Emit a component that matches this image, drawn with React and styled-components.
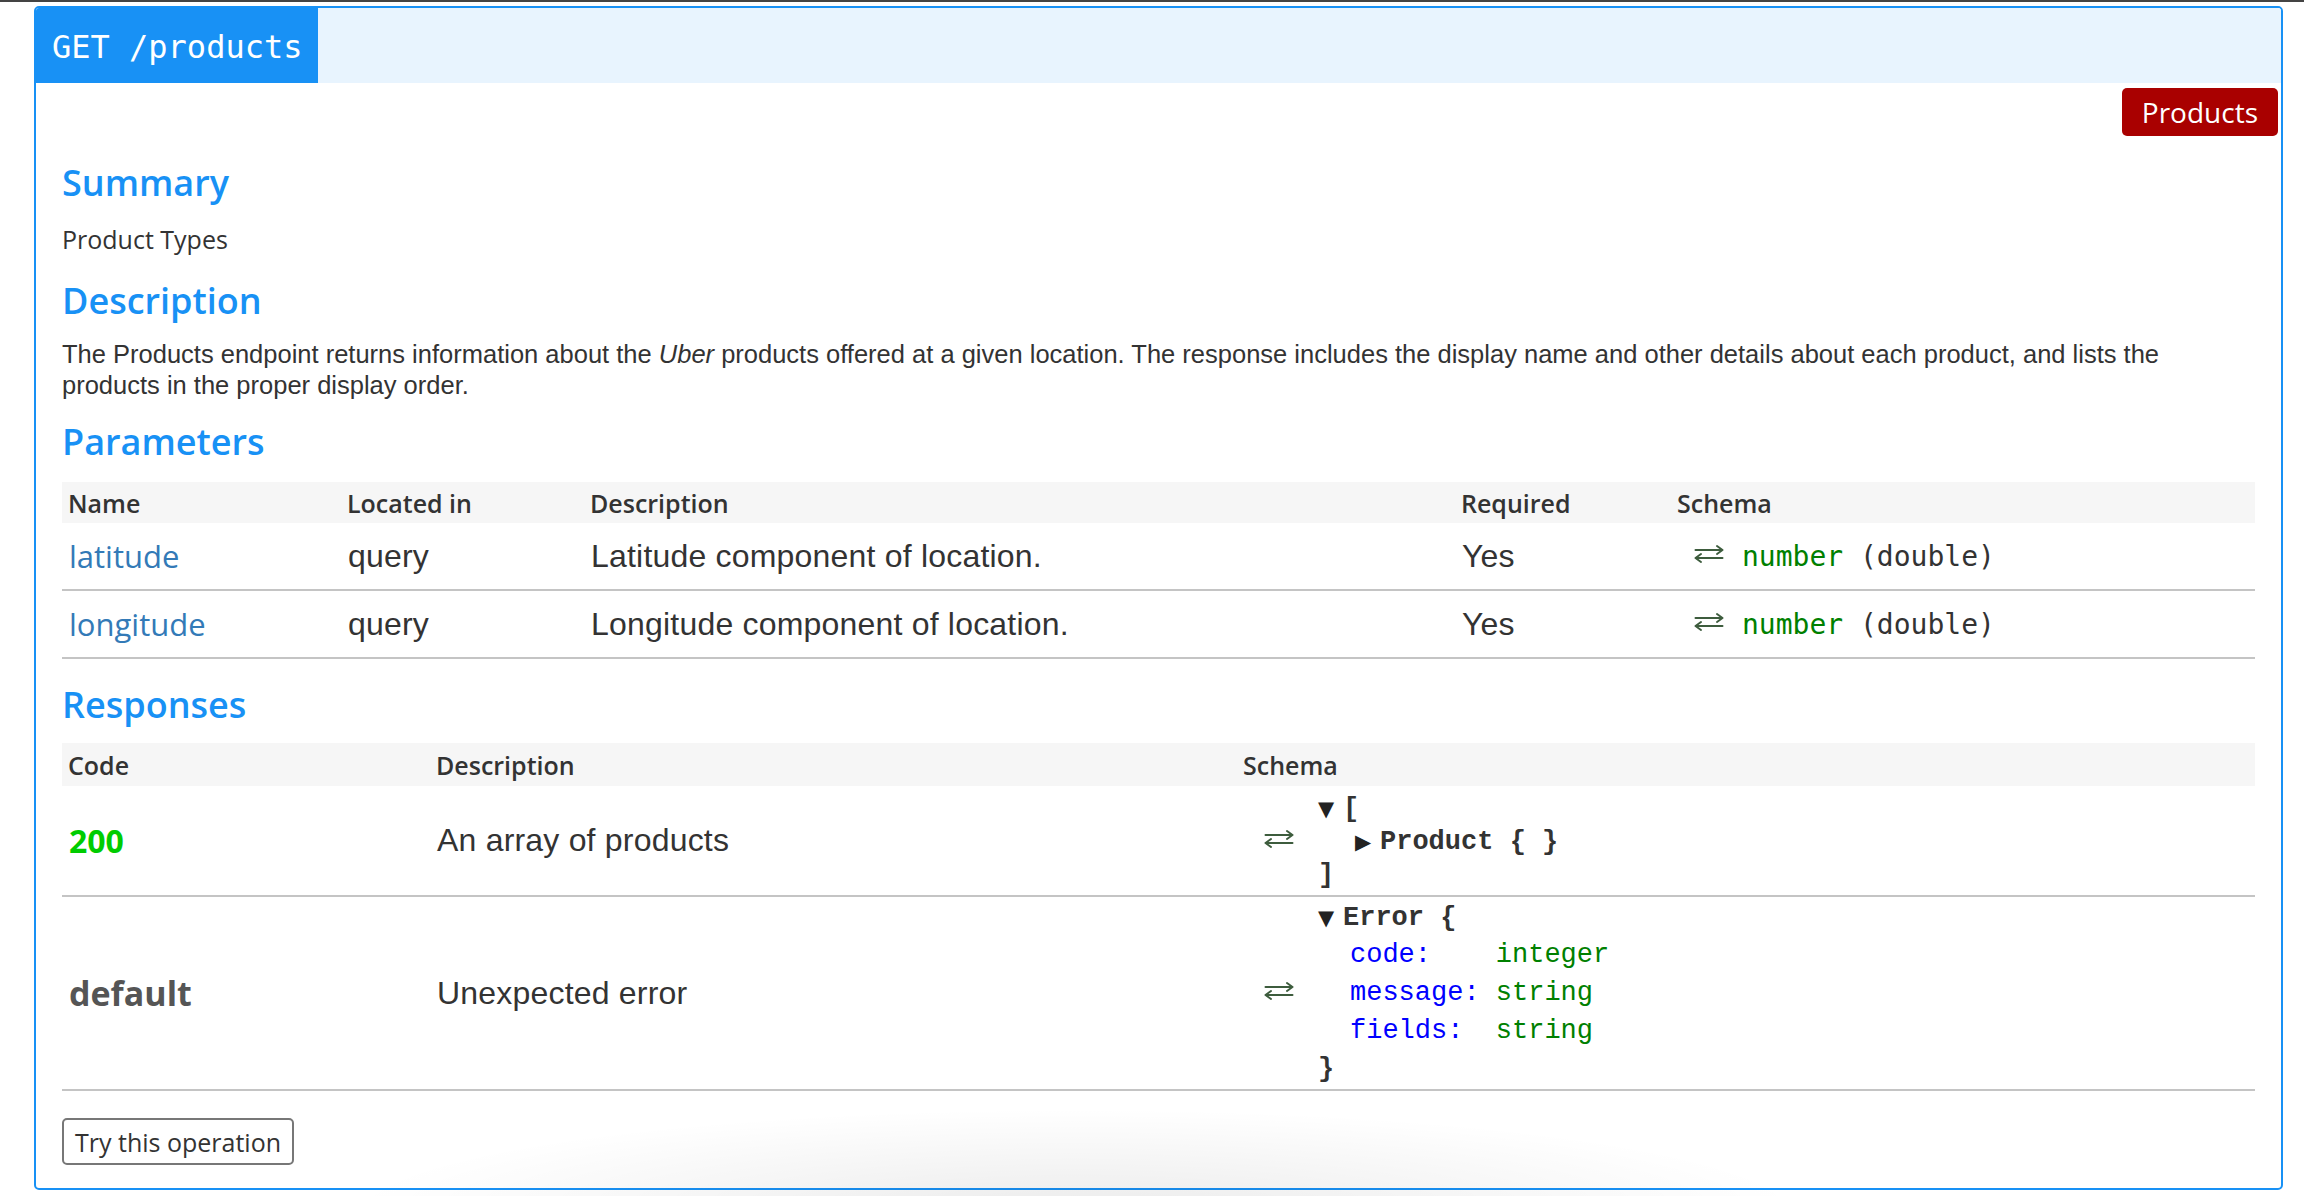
import React from "react"
import styled, { createGlobalStyle } from "styled-components"

const blue = "#1891f5"

const GlobalStyle = createGlobalStyle`
html, body {
  margin: 0;
  padding: 0;
  background: #fff;
}
body {
  border-top: 2px solid #444;
  font-family: "Open Sans", "Liberation Sans", sans-serif;
  color: #333;
}
`

const Page = styled.div`
padding: 4px 21px 6px 34px;
`

const Card = styled.section`
position: relative;
border: 2px solid ${blue};
border-radius: 5px;
padding-bottom: 23px;

&::after {
  content: "";
  position: absolute;
  left: 280px;
  width: 1520px;
  bottom: -26px;
  height: 110px;
  background: radial-gradient(ellipse at 50% 100%, rgba(0,0,0,0.08), rgba(0,0,0,0) 68%);
  pointer-events: none;
}
`

const OpHeader = styled.header`
display: flex;
height: 75px;
background: #e8f4fe;
border-radius: 3px 3px 0 0;
`

const MethodPath = styled.div`
display: flex;
align-items: center;
padding: 2px 16px 0;
background: ${blue};
color: #fff;
font-family: "DejaVu Sans Mono", monospace;
font-size: 32px;
white-space: pre;
border-top-left-radius: 3px;
`

const Body = styled.div`
padding: 0 26px;
`

const TagRow = styled.div`
display: flex;
justify-content: flex-end;
margin: 5px -23px 0 0;
`

const Tag = styled.span`
display: flex;
align-items: center;
height: 48px;
padding: 0 20px;
background: #a90000;
color: #fff;
font-size: 28px;
border-radius: 5px;
`

const Heading = styled.h2`
margin: ${p => p.$top}px 0 0;
font-size: 36px;
line-height: 44px;
font-weight: 600;
color: ${blue};
`

const Summary = styled.p`
margin: 18px 0 0;
font-size: 25px;
line-height: 32px;
color: #333;
`

const Para = styled.p`
margin: 16px 0 0;
max-width: 2160px;
font-family: "Liberation Sans", Arial, sans-serif;
font-size: 25.5px;
line-height: 31px;
color: #333;
`

const Table = styled.div`
margin-top: ${p => p.$top}px;
display: grid;
grid-template-columns: ${p => p.$cols};
`

const HeadCell = styled.div`
display: flex;
align-items: center;
height: ${p => p.$h}px;
padding: 0 6px;
background: #f6f6f6;
font-size: 25px;
font-weight: 600;
color: #333;
`

const Cell = styled.div`
display: flex;
align-items: center;
min-height: ${p => p.$h}px;
padding: 0 6px 0 7px;
border-bottom: 2px solid #c4c4c4;
font-family: "Liberation Sans", Arial, sans-serif;
font-size: 32px;
letter-spacing: 0.2px;
color: #333;
`

const ParamName = styled.a`
font-family: "Open Sans", sans-serif;
font-size: 31px;
letter-spacing: 0;
color: #337ab7;
text-decoration: none;
`

const Code = styled.span`
font-family: "Open Sans", sans-serif;
font-size: ${p => p.$ok ? 32 : 34}px;
font-weight: 700;
letter-spacing: 0;
color: ${p => p.$ok ? "#0c0" : "#555"};
`

const TypeBox = styled.div`
display: flex;
align-items: center;
margin-left: ${p => p.$left}px;
font-family: "DejaVu Sans Mono", monospace;
font-size: 28px;
letter-spacing: 0;
white-space: pre;
`

const Prim = styled.span`
color: #008000;
`

const Swap = styled.svg`
flex: none;
width: 30px;
height: 20px;
margin-right: ${p => p.$gap}px;
margin-top: -4px;
`

const Tree = styled.div`
font-family: "Liberation Mono", "Courier New", monospace;
font-size: 27px;
font-weight: 700;
color: #333;
padding: 2px 0 0;
`

const Line = styled.div`
display: flex;
align-items: center;
height: ${p => p.$lh}px;
padding-left: ${p => p.$indent || 0}px;
white-space: pre;
`

const Toggle = styled.span`
display: inline-block;
width: 25px;
font-family: "DejaVu Sans", sans-serif;
font-size: 21px;
color: #222;
`

const Props = styled.div`
display: grid;
grid-template-columns: 9ch auto;
justify-content: start;
padding-left: 32px;
font-weight: 400;
`

const Key = styled.span`
height: 38px;
line-height: 38px;
color: #0000ff;
`

const Val = styled.span`
height: 38px;
line-height: 38px;
color: #008000;
`

const TryButton = styled.button`
margin-top: 27px;
height: 47px;
padding: 0 11px;
background: #fff;
border: 2px solid #777;
border-radius: 5px;
font-family: "Open Sans", sans-serif;
font-size: 25px;
color: #333;
cursor: pointer;
`

const SwapIcon = ({ gap }) => (
  <Swap $gap={gap} viewBox="0 0 30 20" fill="none" stroke="#3d5c3d" strokeWidth="2" strokeLinecap="round" strokeLinejoin="round">
    <path d="M1.5 6 H28.5 M23 2 L28.5 6 L23 10" />
    <path d="M1.5 14 H28.5 M7 10 L1.5 14 L7 18" />
  </Swap>
)

const params = [
  { name: "latitude", desc: "Latitude component of location." },
  { name: "longitude", desc: "Longitude component of location." },
]

const errorFields = [
  ["code:", "integer"],
  ["message:", "string"],
  ["fields:", "string"],
]

const App = () => (
  <>
    <GlobalStyle />
    <Page>
      <Card>
        <OpHeader>
          <MethodPath>GET /products</MethodPath>
        </OpHeader>
        <Body>
          <TagRow>
            <Tag>Products</Tag>
          </TagRow>

          <Heading $top={25}>Summary</Heading>
          <Summary>Product Types</Summary>

          <Heading $top={24}>Description</Heading>
          <Para>
            The Products endpoint returns information about the <em>Uber</em> products offered at a given location. The response includes the display name and other details about each product, and lists the products in the proper display order.
          </Para>

          <Heading $top={19}>Parameters</Heading>
          <Table $top={18} $cols="279px 243px 871px 216px 1fr">
            <HeadCell $h={41}>Name</HeadCell>
            <HeadCell $h={41}>Located in</HeadCell>
            <HeadCell $h={41}>Description</HeadCell>
            <HeadCell $h={41}>Required</HeadCell>
            <HeadCell $h={41}>Schema</HeadCell>
            {params.map(p => (
              <React.Fragment key={p.name}>
                <Cell $h={66}><ParamName href="#">{p.name}</ParamName></Cell>
                <Cell $h={66}>query</Cell>
                <Cell $h={66}>{p.desc}</Cell>
                <Cell $h={66}>Yes</Cell>
                <Cell $h={66}>
                  <TypeBox $left={16}>
                    <SwapIcon gap={18} />
                    <Prim>number</Prim> (double)
                  </TypeBox>
                </Cell>
              </React.Fragment>
            ))}
          </Table>

          <Heading $top={24}>Responses</Heading>
          <Table $top={16} $cols="368px 807px 1fr">
            <HeadCell $h={43}>Code</HeadCell>
            <HeadCell $h={43}>Description</HeadCell>
            <HeadCell $h={43}>Schema</HeadCell>

            <Cell $h={109}><Code $ok>200</Code></Cell>
            <Cell $h={109}>An array of products</Cell>
            <Cell $h={109}>
              <TypeBox $left={20}>
                <SwapIcon gap={24} />
                <Tree>
                  <Line $lh={33}><Toggle>▼</Toggle>[</Line>
                  <Line $lh={33} $indent={37}><Toggle>▶</Toggle>Product {"{ }"}</Line>
                  <Line $lh={33}>]</Line>
                </Tree>
              </TypeBox>
            </Cell>

            <Cell $h={192}><Code>default</Code></Cell>
            <Cell $h={192}>Unexpected error</Cell>
            <Cell $h={192}>
              <TypeBox $left={20}>
                <SwapIcon gap={24} />
                <Tree>
                  <Line $lh={36}><Toggle>▼</Toggle>Error {"{"}</Line>
                  <Props>
                    {errorFields.map(([k, v]) => (
                      <React.Fragment key={k}>
                        <Key>{k}</Key>
                        <Val>{v}</Val>
                      </React.Fragment>
                    ))}
                  </Props>
                  <Line $lh={38}>{"}"}</Line>
                </Tree>
              </TypeBox>
            </Cell>
          </Table>

          <TryButton>Try this operation</TryButton>
        </Body>
      </Card>
    </Page>
  </>
)

export default App
